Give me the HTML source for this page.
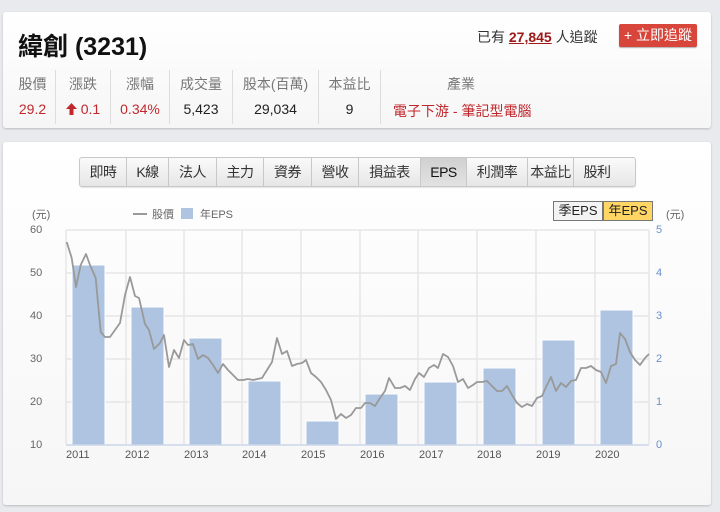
<!DOCTYPE html>
<html><head><meta charset="utf-8"><style>
*{margin:0;padding:0;box-sizing:border-box}
body{width:720px;height:512px;background:#e9eaed;font-family:"Liberation Sans","Noto Sans CJK TC",sans-serif;position:relative;overflow:hidden}
.card{position:absolute;left:3px;width:708px;background:linear-gradient(#fff,#f6f6f6);border-radius:3px;box-shadow:0 1px 2px rgba(0,0,0,.2)}
.abs{position:absolute;white-space:nowrap}
.col{position:absolute;top:58px;height:54px;text-align:center;font-size:14px;border-right:1px solid #ddd}
.col .l{color:#777;margin-top:4px}
.col .v{margin-top:7px;color:#222}
.col .v.red{color:#c0282d}
.tabs{position:absolute;left:79px;top:157px;height:30px;width:557px;display:flex;border:1px solid #c8c8c8;border-radius:3px;background:linear-gradient(#fafafa,#e6e6e6);box-shadow:0 1px 1px rgba(0,0,0,.1)}
.tabs div{border-right:1px solid #c8c8c8;text-align:center;line-height:28px;font-size:14px;color:#333;letter-spacing:-0.5px}
.tabs div:last-child{border-right:none}
.tabs .on{background:linear-gradient(#d0d0d0,#e2e2e2);color:#111}
</style></head><body>
<div class="card" style="top:12px;height:116px"></div>
<div class="abs" style="left:18px;top:27px;font-size:25px;font-weight:bold;color:#111">緯創 (3231)</div>
<div class="abs" style="left:477px;top:27px;font-size:14px;color:#333">已有 <b style="color:#a01818;text-decoration:underline">27,845</b> 人追蹤</div>
<div class="abs" style="left:619px;top:24px;width:78px;height:23px;background:#d8453a;border-radius:2px;color:#fff;font-size:14px;line-height:23px;text-align:center;box-shadow:0 1px 1px rgba(0,0,0,.3)">+ 立即追蹤</div>
<div class="col" style="left:10px;width:46px;top:70px"><div class="l">股價</div><div class="v red">29.2</div></div>
<div class="col" style="left:56px;width:55px;top:70px"><div class="l">漲跌</div><div class="v red"><svg width="11" height="12" viewBox="0 0 11 12" style="vertical-align:-1px"><path d="M5.5 0 L11 6 L7.5 6 L7.5 12 L3.5 12 L3.5 6 L0 6Z" fill="#c0282d"/></svg> 0.1</div></div>
<div class="col" style="left:111px;width:59px;top:70px"><div class="l">漲幅</div><div class="v red">0.34%</div></div>
<div class="col" style="left:170px;width:63px;top:70px"><div class="l">成交量</div><div class="v">5,423</div></div>
<div class="col" style="left:233px;width:86px;top:70px"><div class="l">股本(百萬)</div><div class="v">29,034</div></div>
<div class="col" style="left:319px;width:62px;top:70px"><div class="l">本益比</div><div class="v">9</div></div>
<div class="col" style="left:381px;width:160px;top:70px;border:none"><div class="l">產業</div><div class="v red" style="text-align:left;padding-left:12px">電子下游 - 筆記型電腦</div></div>

<div class="card" style="top:142px;height:363px"></div>
<div class="tabs">
<div style="width:47px">即時</div><div style="width:42px">K線</div><div style="width:48px">法人</div><div style="width:47px">主力</div><div style="width:48px">資券</div><div style="width:47px">營收</div><div style="width:62px">損益表</div><div class="on" style="width:46px">EPS</div><div style="width:61px">利潤率</div><div style="width:46px">本益比</div><div style="width:46px">股利</div>
</div>
<div class="abs" style="left:553px;top:201px;width:50px;height:20px;border:1px solid #777;background:#f3f3f3;font-size:13px;line-height:18px;text-align:center;color:#222">季EPS</div>
<div class="abs" style="left:603px;top:201px;width:50px;height:20px;border:1px solid #777;background:#ffd564;font-size:13px;line-height:18px;text-align:center;color:#222">年EPS</div>
<svg class="abs" style="left:0;top:0" width="720" height="512">
<g font-size="11" fill="#666" font-family="Liberation Sans,Noto Sans CJK TC,sans-serif">
<text x="32" y="218">(元)</text><text x="666" y="218">(元)</text>
<line x1="133" y1="214" x2="147" y2="214" stroke="#999" stroke-width="2"/><text x="152" y="218">股價</text>
<rect x="181" y="208" width="12" height="11" fill="#aec4e0"/><text x="200" y="218">年EPS</text>
<text x="30" y="233">60</text><text x="30" y="276">50</text><text x="30" y="319">40</text><text x="30" y="362">30</text><text x="30" y="405">20</text><text x="30" y="448">10</text>
</g>
<g font-size="11" fill="#6a8fd0"><text x="656" y="233">5</text><text x="656" y="276">4</text><text x="656" y="319">3</text><text x="656" y="362">2</text><text x="656" y="405">1</text><text x="656" y="448">0</text></g>
<g stroke="#e6e6e6" stroke-width="1.5">
<line x1="66" y1="230" x2="649" y2="230"/><line x1="66" y1="273" x2="649" y2="273"/><line x1="66" y1="316" x2="649" y2="316"/><line x1="66" y1="359" x2="649" y2="359"/><line x1="66" y1="402" x2="649" y2="402"/>
<line x1="126" y1="230" x2="126" y2="444"/><line x1="184" y1="230" x2="184" y2="444"/><line x1="242" y1="230" x2="242" y2="444"/><line x1="301" y1="230" x2="301" y2="444"/><line x1="360" y1="230" x2="360" y2="444"/><line x1="418" y1="230" x2="418" y2="444"/><line x1="477" y1="230" x2="477" y2="444"/><line x1="536" y1="230" x2="536" y2="444"/><line x1="595" y1="230" x2="595" y2="444"/><line x1="649" y1="230" x2="649" y2="444"/><line x1="66" y1="230" x2="66" y2="444"/>
</g>
<g fill="#aec4e0" stroke="#fff" stroke-width="1">
<rect x="72" y="265" width="33" height="180"/><rect x="131" y="307" width="33" height="138"/><rect x="189" y="338" width="33" height="107"/><rect x="248" y="381" width="33" height="64"/><rect x="306" y="421" width="33" height="24"/><rect x="365" y="394" width="33" height="51"/><rect x="424" y="382" width="33" height="63"/><rect x="483" y="368" width="33" height="77"/><rect x="542" y="340" width="33" height="105"/><rect x="600" y="310" width="33" height="135"/>
</g>
<line x1="66" y1="445" x2="649" y2="445" stroke="#ccd6eb" stroke-width="1.5"/>
<polyline fill="none" stroke="#999" stroke-width="1.8" stroke-linejoin="round" points="66.7,242 71.7,258 76,287 80.7,265 86,254 90,265 95.7,278 100.7,332 105,337 110,337 115,330 120,323 125,295 130,277 135,296 139,298 145,324 149,330 154,349 160,343 164,335 169,367 174,350 179,358 184,340 188,345 193,344 198,359 203,355 208,358 213,365 218,373 223,364 228,370 233,375 238,380 243,380 248,379 253,380 262,378 267,370 272,362 277,338 282,354 287,351 292,366 297,364 302,363 306,360 311,373 316,377 321,382 326,390 331,400 336,419 341,414 346,418 351,415 356,408 361,408 365,403 370,403 375,406 380,398 385,391 389,378 395,388 400,388 405,386 410,390 415,379 419,373 424,377 429,368 434,365 438,368 443,354 448,357 453,366 458,382 463,379 468,388 473,385 477,382 482,382 487,381 492,386 497,391 502,391 507,386 512,395 517,403 522,407 527,404 532,406 537,398 542,396 547,385 551,377 556,391 561,383 566,387 571,381 576,380 581,368 586,368 591,366 596,370 601,372 606,383 611,366 616,364 620,333 625,339 630,352 635,360 640,365 645,358 649,354"/>
<g font-size="11" fill="#555"><text x="66" y="458">2011</text><text x="125" y="458">2012</text><text x="184" y="458">2013</text><text x="242" y="458">2014</text><text x="301" y="458">2015</text><text x="360" y="458">2016</text><text x="419" y="458">2017</text><text x="477" y="458">2018</text><text x="536" y="458">2019</text><text x="595" y="458">2020</text></g>
</svg>
</body></html>
